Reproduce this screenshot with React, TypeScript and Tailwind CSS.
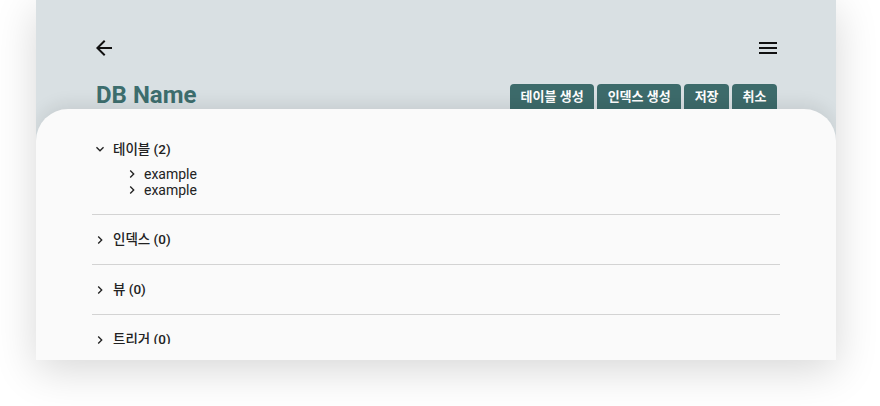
import React from "react";

const font = { fontFamily: 'Roboto, "Noto Sans CJK KR", sans-serif' };

function ChevronRight() {
  return (
    <svg width="16" height="16" viewBox="0 0 24 24" className="shrink-0">
      <path d="M10 6L8.59 7.41 13.17 12l-4.58 4.59L10 18l6-6z" fill="#222" />
    </svg>
  );
}

function ChevronDown() {
  return (
    <svg width="16" height="16" viewBox="0 0 24 24" className="shrink-0">
      <path d="M16.59 8.59L12 13.17 7.41 8.59 6 10l6 6 6-6z" fill="#222" />
    </svg>
  );
}

function Section({ title, items, open }: { title: string; items?: string[]; open?: boolean }) {
  return (
    <div className="border-b border-[#d3d3d3]">
      <div className={`flex items-center ${open ? "h-[34px]" : "h-[49px]"}`}>
        {open ? <ChevronDown /> : <ChevronRight />}
        <span className="ml-[5px] text-[13.5px] font-medium text-[#222]">{title}</span>
      </div>
      {open && items && (
        <div className="pl-[32px] pb-[16px]">
          {items.map((it, i) => (
            <div key={i} className="flex items-center h-[16px]">
              <ChevronRight />
              <span className="ml-[4px] text-[14px] text-[#222] leading-[16px]">{it}</span>
            </div>
          ))}
        </div>
      )}
    </div>
  );
}

export default function App() {
  return (
    <div className="w-[880px] h-[406px] bg-white" style={font}>
      <div className="ml-[36px] w-[800px] h-[360px] bg-[#d9e0e3] overflow-hidden flex flex-col shadow-[0_10px_40px_rgba(0,0,0,0.16)]">
        <div className="px-[56px] pt-[36px] flex justify-between">
          <svg width="24" height="24" viewBox="0 0 24 24">
            <path d="M20 11H7.83l5.59-5.59L12 4l-8 8 8 8 1.41-1.41L7.83 13H20v-2z" fill="#111" />
          </svg>
          <svg width="24" height="24" viewBox="0 0 24 24">
            <path d="M3 18h18v-2H3v2zm0-5h18v-2H3v2zm0-7v2h18V6H3z" fill="#111" />
          </svg>
        </div>
        <div className="pr-[59px] pl-[60px] h-[49px] flex items-end justify-between">
          <span className="text-[24px] leading-[28px] font-bold text-[#3d6e6e]">DB Name</span>
          <div className="flex gap-[3px]">
            {["테이블 생성", "인덱스 생성", "저장", "취소"].map((b) => (
              <div
                key={b}
                className="h-[25px] px-[10.5px] rounded-t-[4px] bg-[#3d6b6b] text-white text-[13px] font-bold leading-[25px]"
              >
                {b}
              </div>
            ))}
          </div>
        </div>
        <div className="flex-1 bg-[#fafafa] rounded-t-[32px] shadow-[0_-6px_16px_rgba(0,0,0,0.08)] px-[56px] pt-[23px]">
          <div className="h-[212px] overflow-hidden">
            <Section title="테이블 (2)" items={["example", "example"]} open />
            <Section title="인덱스 (0)" />
            <Section title="뷰 (0)" />
            <Section title="트리거 (0)" />
          </div>
        </div>
      </div>
    </div>
  );
}
